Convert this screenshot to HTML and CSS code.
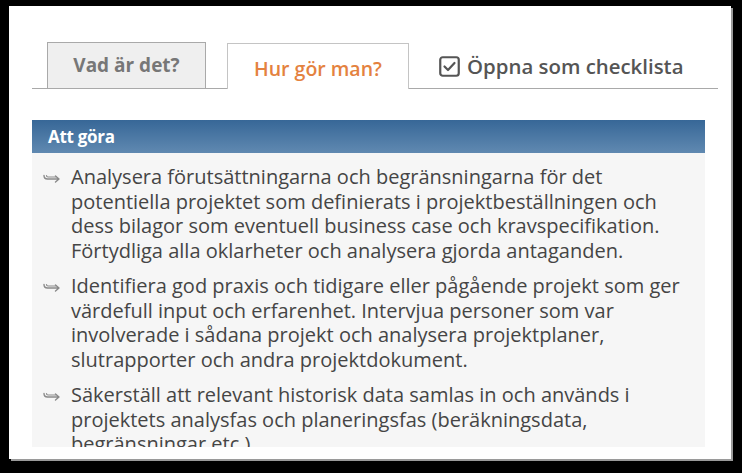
FILE: index.html
```html
<!DOCTYPE html>
<html lang="sv">
<head>
<meta charset="utf-8">
<link rel="stylesheet" href="styles.css">
</head>
<body>
<div class="panel">
  <div class="tabs">
    <div class="tab tab-inactive">Vad är det?</div>
    <div class="tab tab-active">Hur gör man?</div>
    <div class="checklist">
      <svg class="checkbox" viewBox="0 0 21 21" width="21" height="21">
        <rect x="1.25" y="1.25" width="18.5" height="18.5" rx="2.5" fill="none" stroke="#555" stroke-width="2.2"/>
        <path d="M5.5 10.5 L9 14 L15.5 7" fill="none" stroke="#555" stroke-width="2.2" stroke-linecap="round" stroke-linejoin="round"/>
      </svg>
      <span>Öppna som checklista</span>
    </div>
  </div>
  <div class="section-head">Att göra</div>
  <div class="section-body">
    <ul class="todo">
      <li><svg class="arrow" viewBox="0 0 18 10" width="18" height="10"><path d="M1 2.5 C1 5.5 2.5 6 4.5 6 L16 6 M12.5 3 L16 6 L12.5 9" fill="none" stroke="#8a8a8a" stroke-width="1.4" stroke-linecap="round" stroke-linejoin="round"/><path d="M3.5 2.5 C3.5 3.5 4 4 5 4 L13 4" fill="none" stroke="#8a8a8a" stroke-width="1.2" stroke-linecap="round"/></svg><span class="item-text">Analysera förutsättningarna och begränsningarna för det potentiella projektet som definierats i projektbeställningen och dess bilagor som eventuell business case och kravspecifikation. Förtydliga alla oklarheter och analysera gjorda antaganden.</span></li>
      <li><svg class="arrow" viewBox="0 0 18 10" width="18" height="10"><path d="M1 2.5 C1 5.5 2.5 6 4.5 6 L16 6 M12.5 3 L16 6 L12.5 9" fill="none" stroke="#8a8a8a" stroke-width="1.4" stroke-linecap="round" stroke-linejoin="round"/><path d="M3.5 2.5 C3.5 3.5 4 4 5 4 L13 4" fill="none" stroke="#8a8a8a" stroke-width="1.2" stroke-linecap="round"/></svg><span class="item-text">Identifiera god praxis och tidigare eller pågående projekt som ger värdefull input och erfarenhet. Intervjua personer som var involverade i sådana projekt och analysera projektplaner, slutrapporter och andra projektdokument.</span></li>
      <li><svg class="arrow" viewBox="0 0 18 10" width="18" height="10"><path d="M1 2.5 C1 5.5 2.5 6 4.5 6 L16 6 M12.5 3 L16 6 L12.5 9" fill="none" stroke="#8a8a8a" stroke-width="1.4" stroke-linecap="round" stroke-linejoin="round"/><path d="M3.5 2.5 C3.5 3.5 4 4 5 4 L13 4" fill="none" stroke="#8a8a8a" stroke-width="1.2" stroke-linecap="round"/></svg><span class="item-text">Säkerställ att relevant historisk data samlas in och används i projektets analysfas och planeringsfas (beräkningsdata, begränsningar etc.).</span></li>
    </ul>
  </div>
</div>
</body>
</html>
```

FILE: styles.css
```css
html, body {
  margin: 0;
  padding: 0;
  background: #000;
}
body {
  width: 742px;
  height: 473px;
  overflow: hidden;
  font-family: "Open Sans", "Noto Sans", sans-serif;
}
.panel {
  margin: 6px 0 0 9px;
  width: 722px;
  height: 453px;
  background: #fff;
  box-shadow: 2px 2px 0 #9a9a9a;
  overflow: hidden;
}
.tabs {
  margin: 35px 0 0 23px;
  width: 686px;
  height: 47px;
  display: flex;
  align-items: flex-end;
  border-bottom: 1px solid #a9a9a9;
}
.tab {
  box-sizing: border-box;
  display: flex;
  align-items: center;
  justify-content: center;
  border: 1px solid #a9a9a9;
  border-bottom: none;
}
.tab-inactive {
  margin-left: 15px;
  width: 159px;
  height: 46px;
  background: #efefef;
  color: #777;
  font-size: 19px;
  font-weight: 700;
  padding-bottom: 2px;
}
.tab-active {
  margin-left: 21px;
  width: 182px;
  height: 46px;
  margin-bottom: -1px;
  background: #fff;
  border-color: #c4c4c4;
  color: #e4823f;
  font-size: 19.5px;
  font-weight: 600;
  padding-top: 4px;
}
.checklist {
  margin-left: 30px;
  height: 46px;
  display: flex;
  align-items: center;
  gap: 7px;
  color: #555;
  font-size: 20.4px;
  font-weight: 600;
  padding-top: 2px;
  box-sizing: border-box;
}
.checkbox {
  display: block;
}
.section-head {
  margin: 31px 0 0 23px;
  width: 673px;
  height: 33px;
  box-sizing: border-box;
  padding-left: 16px;
  display: flex;
  align-items: center;
  background: linear-gradient(#376797, #6089b1);
  color: #fff;
  font-weight: 700;
  font-size: 17px;
  letter-spacing: -0.3px;
}
.section-body {
  margin-left: 23px;
  width: 673px;
  height: 294px;
  background: #f6f6f6;
  overflow: hidden;
}
.todo {
  list-style: none;
  margin: 0;
  padding: 12px 0 0 11px;
}
.todo li {
  display: flex;
  align-items: flex-start;
  gap: 10px;
  margin-bottom: 11px;
  font-size: 20px;
  line-height: 24.5px;
  color: #454545;
}
.item-text {
  max-width: 616px;
}
.arrow {
  flex: none;
  margin-top: 8px;
  width: 18px;
  height: 10px;
}
```
